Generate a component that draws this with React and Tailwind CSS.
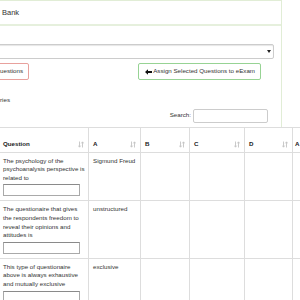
import React from "react";

const SortIcon = () => (
  <svg width="6" height="7" viewBox="0 0 6 7" className="shrink-0">
    <path d="M1.5 0.5V6M0.3 4.6L1.5 6.2L2.7 4.6" stroke="#c4c4c4" strokeWidth="0.9" fill="none" />
    <path d="M4.5 6.5V1M3.3 2.4L4.5 0.8L5.7 2.4" stroke="#c4c4c4" strokeWidth="0.9" fill="none" />
  </svg>
);

const ArrowLeft = () => (
  <svg width="7" height="6" viewBox="0 0 7 6" className="shrink-0">
    <path d="M0 3L3 0.3V2.1H7V3.9H3V5.7Z" fill="#111" />
  </svg>
);

const rows = [
  { q: "The psychology of the psychoanalysis perspective is related to", a: "Sigmund Freud" },
  { q: "The questionaire that gives the respondents freedom to reveal their opinions and attitudes is", a: "unstructured" },
  { q: "This type of questionaire above is always exhaustive and mutually exclusive", a: "exclusive" },
];

const headers = ["Question", "A", "B", "C", "D"];

const App = () => {
  return (
    <div className="w-[300px] h-[300px] overflow-hidden bg-white text-[#333] font-['Liberation_Sans',Arial,sans-serif] text-[6.2px] leading-[8.6px]">
      {/* Panel, left part scrolled out of view */}
      <div className="w-[284px] -ml-[2px] border border-b-0 border-[#e1edd6]">
        <div className="h-[25px] border-b-2 border-[#e6f0dd] flex items-center pl-[3px] pt-[2px]">
          <span className="text-[7.5px] text-[#333] whitespace-nowrap">Bank</span>
        </div>
        <div className="pt-[18px] pr-[7px] pb-[4px]">
          <div className="-ml-[10px] h-[15px] border border-[#ccc] rounded-[2px] shadow-[inset_0_1px_1px_rgba(0,0,0,0.1)] flex items-center justify-end pr-[2px]">
            <svg width="4" height="3" viewBox="0 0 4 3">
              <path d="M0 0H4L2 3Z" fill="#222" />
            </svg>
          </div>
          <div className="mt-[4px] flex items-center">
            <button className="-ml-[5px] h-[17px] px-[5px] border border-[#e8a19d] rounded-[2px] bg-white text-[#333] whitespace-nowrap">
              uestions
            </button>
            <button className="ml-auto mr-[13px] h-[17px] pl-[6px] pr-[5px] border border-[#97d394] rounded-[2px] bg-white text-[#333] flex items-center gap-[1px] whitespace-nowrap">
              <ArrowLeft />
              Assign Selected Questions to eExam
            </button>
          </div>
          <div className="mt-[16px] ml-[1px] whitespace-nowrap">ries</div>
          <div className="mt-[4px] flex items-center justify-end gap-[2px] pr-[6px]">
            <span>Search:</span>
            <input className="w-[75px] h-[14px] border border-[#ccc] rounded-[2px] outline-none" />
          </div>
        </div>
      </div>

      {/* Table */}
      <table className="-ml-[2px] table-fixed border-collapse w-[354px]">
        <colgroup>
          <col className="w-[90px]" />
          <col className="w-[52px]" />
          <col className="w-[49px]" />
          <col className="w-[55px]" />
          <col className="w-[48px]" />
          <col className="w-[60px]" />
        </colgroup>
        <thead>
          <tr>
            {headers.map((h) => (
              <th
                key={h}
                className="h-[25px] border border-[#ddd] align-bottom pl-[4px] pr-[4px] pb-[3px] text-left font-bold text-[#222]"
              >
                <div className="flex items-center justify-between">
                  <span className="whitespace-nowrap">{h}</span>
                  <SortIcon />
                </div>
              </th>
            ))}
            <th className="h-[25px] border border-[#ddd] align-bottom pl-[2px] pb-[3px] text-left font-bold text-[#222]">
              A
            </th>
          </tr>
        </thead>
        <tbody>
          {rows.map((r) => (
            <tr key={r.a}>
              <td className="border border-[#ddd] align-top pl-[4px] pr-[3px] pt-[4px] pb-[4px]">
                <div>{r.q}</div>
                <input className="mt-[2px] w-[77px] h-[12px] border border-[#a9a9a9] border-t-[#8a8a8a] outline-none block" />
              </td>
              <td className="border border-[#ddd] align-top pl-[4px] pt-[4px]">{r.a}</td>
              <td className="border border-[#ddd]"></td>
              <td className="border border-[#ddd]"></td>
              <td className="border border-[#ddd]"></td>
              <td className="border border-[#ddd]"></td>
            </tr>
          ))}
        </tbody>
      </table>
    </div>
  );
};

export default App;
